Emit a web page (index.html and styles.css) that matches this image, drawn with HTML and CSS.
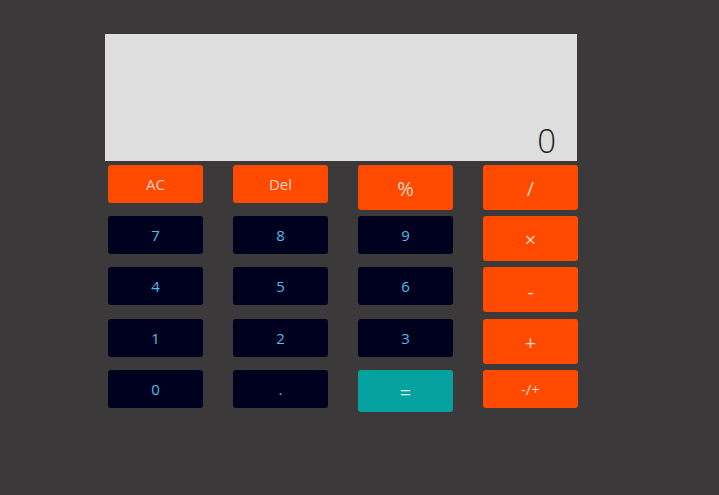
FILE: index.html
```html
<!DOCTYPE html>
<html>
<head>
<meta charset="utf-8">
<link rel="stylesheet" href="styles.css">
</head>
<body>
<div class="calc">
  <div class="display"><span class="value">0</span></div>
  <div class="keys">
    <button class="key op small">AC</button>
    <button class="key op small">Del</button>
    <button class="key op big">%</button>
    <button class="key op big">/</button>
    <button class="key num">7</button>
    <button class="key num">8</button>
    <button class="key num">9</button>
    <button class="key op big">×</button>
    <button class="key num">4</button>
    <button class="key num">5</button>
    <button class="key num">6</button>
    <button class="key op big">-</button>
    <button class="key num">1</button>
    <button class="key num">2</button>
    <button class="key num">3</button>
    <button class="key op big">+</button>
    <button class="key num">0</button>
    <button class="key num">.</button>
    <button class="key eq">=</button>
    <button class="key op small">-/+</button>
  </div>
</div>
</body>
</html>
```
FILE: styles.css
```css
html, body {
  margin: 0;
  padding: 0;
  background: #3b3939;
  font-family: "Open Sans", "Noto Sans", sans-serif;
  height: 100%;
}
.calc {
  padding: 34px 0 0 105px;
  width: 473px;
}
.display {
  width: 472px;
  height: 127px;
  background: #dedede;
  display: flex;
  align-items: flex-end;
  justify-content: flex-end;
  box-sizing: border-box;
  padding: 0 21px 0 0;
}
.value {
  font-size: 33px;
  font-weight: 300;
  color: #222;
  line-height: 40px;
}
.keys {
  display: grid;
  grid-template-columns: repeat(4, 95px);
  column-gap: 30px;
  grid-auto-rows: 45px;
  row-gap: 6.4px;
  margin: 3.5px 0 0 3px;
  align-items: start;
}
.key {
  border: none;
  border-radius: 3px;
  margin: 0;
  padding: 0;
  font-family: inherit;
  display: flex;
  align-items: center;
  justify-content: center;
  height: 38px;
  font-size: 15px;
}
.num {
  background: #00001f;
  color: #4fbfe6;
}
.op {
  background: #ff4a00;
  color: #f7d3c3;
}
.op.big {
  height: 45px;
  font-size: 20px;
  padding-top: 3px;
}
.op.small {
  height: 38px;
  font-size: 15px;
}
.eq {
  background: #05a19e;
  color: #dff3f2;
  height: 42px;
  font-size: 20px;
  padding-top: 3px;
}
```
